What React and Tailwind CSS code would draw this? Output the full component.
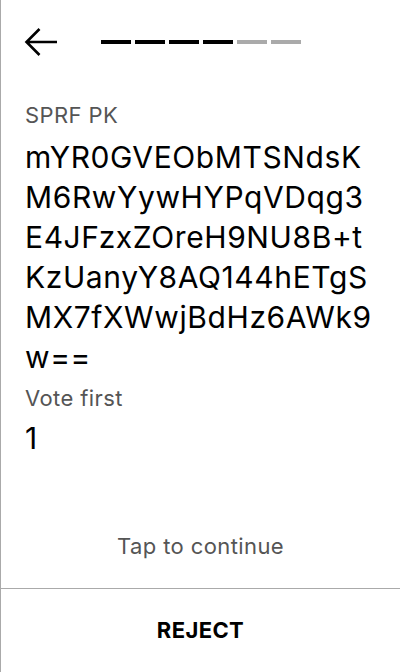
export default function App() {
  const segs = [1, 1, 1, 1, 0, 0];
  const lines = [
    "mYR0GVEObMTSNdsK",
    "M6RwYywHYPqVDqg3",
    "E4JFzxZOreH9NU8B+t",
    "KzUanyY8AQ144hETgS",
    "MX7fXWwjBdHz6AWk9",
    "w==",
  ];
  return (
    <div className="w-[400px] h-[672px] bg-white border-l border-[#aaaaaa] flex flex-col overflow-hidden" style={{ fontFamily: "Inter, 'Noto Sans', sans-serif" }}>
      <div className="h-[84px] shrink-0 flex items-center pl-[23px]">
        <svg width="34" height="30" viewBox="0 0 34 30" className="mr-[43px]">
          <path d="M33 15H3M15.5 2L2.5 15l13 13" fill="none" stroke="#000" strokeWidth="2.6" />
        </svg>
        <div className="flex gap-[4px]">
          {segs.map((s, i) => (
            <div key={i} className={`w-[30px] h-[4px] ${s ? "bg-black" : "bg-[#aaaaaa]"}`} />
          ))}
        </div>
      </div>
      <div className="px-[24px] pt-[19px] flex-1 flex flex-col">
        <div className="text-[22px] leading-[24px] tracking-[0.4px] text-[#555555]">SPRF PK</div>
        <div className="text-[30px] leading-[40px] tracking-[0.6px] text-black mt-[10px]">
          {lines.map((l, i) => (
            <div key={i} className="whitespace-nowrap">{l}</div>
          ))}
        </div>
        <div className="text-[22px] leading-[24px] tracking-[0.4px] text-[#555555] mt-[9px]">Vote first</div>
        <div className="text-[30px] leading-[40px] text-black mt-[8px]">1</div>
        <div className="flex-1" />
        <div className="text-center text-[22px] leading-[24px] tracking-[0.4px] text-[#555555] mb-[30px]">Tap to continue</div>
      </div>
      <div className="h-[84px] shrink-0 border-t border-[#aaaaaa] flex items-center justify-center">
        <span className="text-[22px] font-bold tracking-[0.4px] text-black">REJECT</span>
      </div>
    </div>
  );
}
